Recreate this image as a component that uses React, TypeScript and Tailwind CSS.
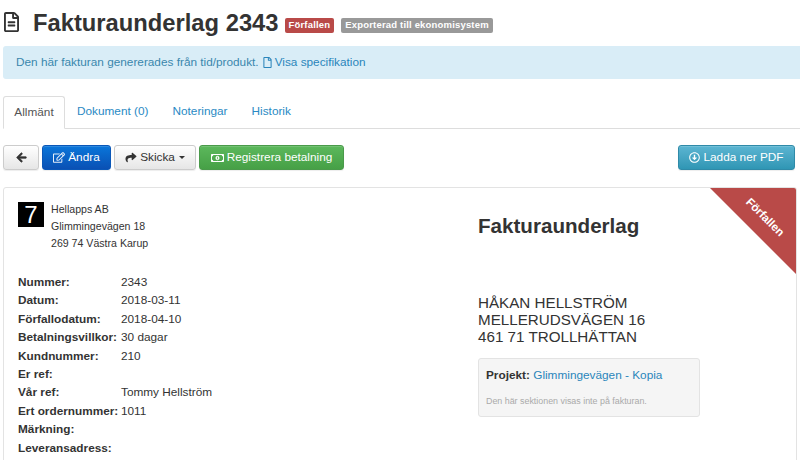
import React from "react";
import { FaRegFileAlt, FaRegFile, FaArrowLeft, FaRegEdit, FaShare, FaRegMoneyBillAlt, FaRegArrowAltCircleDown } from "react-icons/fa";

const rows: [string, string][] = [
  ["Nummer:", "2343"],
  ["Datum:", "2018-03-11"],
  ["Förfallodatum:", "2018-04-10"],
  ["Betalningsvillkor:", "30 dagar"],
  ["Kundnummer:", "210"],
  ["Er ref:", ""],
  ["Vår ref:", "Tommy Hellström"],
  ["Ert ordernummer:", "1011"],
  ["Märkning:", ""],
  ["Leveransadress:", ""],
];

const btn = "h-[25px] rounded-[3px] border flex items-center justify-center text-[11.8px] shadow-[inset_0_1px_0_rgba(255,255,255,0.15),0_1px_1px_rgba(0,0,0,0.075)]";

export default function App() {
  return (
    <div className="w-[800px] h-[460px] overflow-hidden bg-white text-[#333] font-['Liberation_Sans',Arial,sans-serif] pl-[3px]">
      <div className="h-[46px] flex items-center">
        <FaRegFileAlt className="text-[#333] w-[17px] h-[20px] mr-[13px] mt-[-2px]" />
        <h1 className="text-[23.75px] leading-[30px] font-bold mt-[-1px] text-[#333]">Fakturaunderlag 2343</h1>
        <span className="ml-[6px] mt-[5px] h-[15px] px-[4px] rounded-[2px] bg-[#b94a48] text-white text-[9.5px] font-bold leading-[14px] tracking-[0.18px]">Förfallen</span>
        <span className="ml-[7px] mt-[5px] h-[15px] px-[4px] rounded-[2px] bg-[#999] text-white text-[9.5px] font-bold leading-[14px] tracking-[0.18px]">Exporterad till ekonomisystem</span>
      </div>

      <div className="h-[33px] rounded-l-[3px] bg-[#d9edf7] text-[#3a87ad] text-[11.8px] flex items-center pl-[13px]">
        <span>Den här fakturan genererades från tid/produkt.</span>
        <a className="ml-[4px] flex items-center text-[#2a85bb]">
          <FaRegFile className="w-[9px] h-[11px] mr-[3px]" />
          Visa specifikation
        </a>
      </div>

      <div className="mt-[17px] h-[33px] flex border-b border-[#ddd] text-[11.8px]">
        <div className="w-[62px] h-[33px] bg-white border border-[#ddd] border-b-white rounded-t-[3px] flex items-center justify-center text-[#555]">Allmänt</div>
        <div className="ml-[12px] h-[32px] flex items-center text-[#2a8ac4]">Dokument (0)</div>
        <div className="ml-[24px] h-[32px] flex items-center text-[#2a8ac4]">Noteringar</div>
        <div className="ml-[24px] h-[32px] flex items-center text-[#2a8ac4]">Historik</div>
      </div>

      <div className="mt-[16px] flex items-center h-[25px] pr-[5px]">
        <button className={`${btn} w-[36px] border-[#ccc] bg-gradient-to-b from-white to-[#e6e6e6] text-[#333]`}>
          <FaArrowLeft className="w-[11px] h-[11px] stroke-[30px]" />
        </button>
        <button className={`${btn} ml-[3px] w-[69px] border-[#0a57b8] bg-gradient-to-b from-[#0a76da] to-[#0a50b4] text-white`}>
          <FaRegEdit className="w-[12px] h-[11px] mr-[3px] opacity-90" />
          Ändra
        </button>
        <button className={`${btn} ml-[3px] w-[82px] border-[#ccc] bg-gradient-to-b from-white to-[#e6e6e6] text-[#333]`}>
          <FaShare className="w-[12px] h-[11px] mr-[3px]" />
          Skicka
          <span className="ml-[4px] w-0 h-0 border-x-[3px] border-x-transparent border-t-[3px] border-t-[#333]" />
        </button>
        <button className={`${btn} ml-[3px] w-[145px] border-[#4a9a4a] bg-gradient-to-b from-[#5cb85c] to-[#46a046] text-white`}>
          <FaRegMoneyBillAlt className="w-[13px] h-[12px] mr-[3px]" />
          Registrera betalning
        </button>
        <button className={`${btn} ml-auto w-[117px] border-[#2f8aa8] bg-gradient-to-b from-[#5bb5d2] to-[#2f96b4] text-white`}>
          <FaRegArrowAltCircleDown className="w-[11px] h-[11px] mr-[3px]" />
          Ladda ner PDF
        </button>
      </div>

      <div className="relative mt-[17px] mr-[3px] h-[300px] border border-[#e3e3e3] rounded-[3px] overflow-hidden flex">
        <div className="w-[474px] pl-[14px] pt-[14px] shrink-0">
          <div className="flex">
            <div className="w-[26px] h-[25px] bg-black text-white text-[24px] leading-[25px] flex items-center justify-center">7</div>
            <div className="ml-[7px] mt-[-1px] text-[10.6px] leading-[17px] text-[#333]">
              <div>Hellapps AB</div>
              <div>Glimmingevägen 18</div>
              <div>269 74 Västra Karup</div>
            </div>
          </div>
          <div className="mt-[21px] text-[11.8px] leading-[18.4px]">
            {rows.map(([k, v]) => (
              <div key={k} className="flex">
                <span className="w-[103px] font-bold whitespace-nowrap">{k}</span>
                <span>{v}</span>
              </div>
            ))}
          </div>
        </div>
        <div className="flex-1 pt-[26px]">
          <div className="text-[20.6px] leading-[24px] font-bold text-[#333]">Fakturaunderlag</div>
          <div className="mt-[56px] text-[15.2px] leading-[17px] text-[#333]">
            <div>HÅKAN HELLSTRÖM</div>
            <div>MELLERUDSVÄGEN 16</div>
            <div>461 71 TROLLHÄTTAN</div>
          </div>
          <div className="mt-[13px] w-[222px] h-[59px] rounded-[3px] bg-[#f5f5f5] border border-[#e3e3e3] px-[7px] pt-[8px]">
            <div className="text-[11.8px] leading-[16px]">
              <b>Projekt:</b> <span className="text-[#2a85bb]">Glimmingevägen - Kopia</span>
            </div>
            <div className="mt-[12px] text-[8.9px] leading-[12px] text-[#aaa]">Den här sektionen visas inte på fakturan.</div>
          </div>
        </div>
        <svg className="absolute top-0 right-0 w-[86px] h-[86px]" viewBox="0 0 86 86">
          <polygon points="0,0 86,0 86,86" fill="#b94a48" />
        </svg>
        <span className="absolute top-[22px] right-[6px] rotate-45 text-white text-[11.5px] font-bold leading-[14px]">Förfallen</span>
      </div>
    </div>
  );
}
